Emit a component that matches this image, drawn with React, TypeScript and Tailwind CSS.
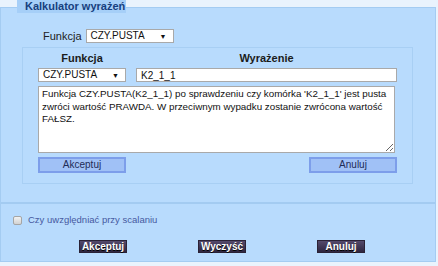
import React from 'react'

const font = { fontFamily: '"Liberation Sans", Arial, sans-serif' }

function Select({ value }: { value: string }) {
  return (
    <div className="flex items-center justify-between w-[88px] h-[14px] bg-white border border-[#a9a9a9] pl-[4px] pr-[6px] text-[10px] leading-none text-[#111]">
      <span>{value}</span>
      <span className="text-[7px]">▼</span>
    </div>
  )
}

export default function App() {
  return (
    <div className="w-[438px] h-[266px] bg-[#e9f3fd] pt-[7px]" style={font}>
      <div className="relative w-[436px] h-[255px] bg-[#b8dbfd] border border-[#a4ccf2] flex flex-col">
        <div className="absolute -top-[8px] left-[16px] w-[109px] h-[13px] bg-[#a6cff8] pl-[8px] text-[11px] font-bold leading-[12px] text-[#17407e]">
          Kalkulator wyrażeń
        </div>

        <div className="flex items-center h-[14px] mt-[21px] ml-[42px] gap-[4px] text-[11px] leading-[14px] text-[#222]">
          <span>Funkcja</span>
          <Select value="CZY.PUSTA" />
        </div>

        <div className="ml-[21px] mt-[4px] w-[391px] h-[137px] border border-[#a8cff4] px-[15px] pt-[4px]">
          <div className="flex gap-[10px] text-[11px] font-bold text-[#1b1b1b] leading-[13px]">
            <div className="w-[88px] text-center">Funkcja</div>
            <div className="flex-1 text-center">Wyrażenie</div>
          </div>
          <div className="flex gap-[10px] mt-[3px]">
            <Select value="CZY.PUSTA" />
            <input
              readOnly
              defaultValue="K2_1_1"
              className="flex-1 h-[14px] bg-white border border-[#a9a9a9] px-[4px] text-[10px] text-[#111] outline-none"
              style={font}
            />
          </div>
          <textarea
            readOnly
            wrap="off"
            defaultValue={
              "Funkcja CZY.PUSTA(K2_1_1) po sprawdzeniu czy komórka 'K2_1_1' jest pusta\nzwróci wartość PRAWDA. W przeciwnym wypadku zostanie zwrócona wartość\nFAŁSZ."
            }
            className="block w-[357px] h-[67px] mt-[4px] bg-white border border-[#a9a9a9] px-[3px] py-[1px] text-[9.8px] leading-[12.5px] text-[#111] outline-none overflow-hidden resize-y"
            style={font}
          />
          <div className="flex justify-between mt-[4px]">
            <button className="w-[88px] h-[16px] bg-[#a0c1f6] border-2 border-[#7d9eea] text-[10px] leading-none text-[#1e2c57]">
              Akceptuj
            </button>
            <button className="w-[88px] h-[16px] bg-[#a0c1f6] border-2 border-[#7d9eea] text-[10px] leading-none text-[#1e2c57]">
              Anuluj
            </button>
          </div>
        </div>

        <div className="mt-[18px] border-t-2 border-[#a3cbf1]" />

        <div className="flex items-center h-[12px] mt-[10px] ml-[12px] gap-[6px] text-[9.5px] leading-[12px] text-[#4659a0]">
          <span className="w-[9px] h-[9px] rounded-[2px] border border-[#a5a5a5] bg-gradient-to-b from-[#f2f2f2] to-[#d2d2d2]" />
          <span>Czy uwzględniać przy scalaniu</span>
        </div>

        <div className="flex mt-[14px] ml-[78px] gap-[71px]">
          {['Akceptuj', 'Wyczyść', 'Anuluj'].map((t) => (
            <button
              key={t}
              className="w-[48px] h-[13px] bg-gradient-to-b from-[#544a6c] to-[#2e2640] border border-[#2a2236] text-[10px] font-bold leading-none text-white [text-shadow:0_1px_0_#000]"
            >
              {t}
            </button>
          ))}
        </div>
      </div>
    </div>
  )
}
